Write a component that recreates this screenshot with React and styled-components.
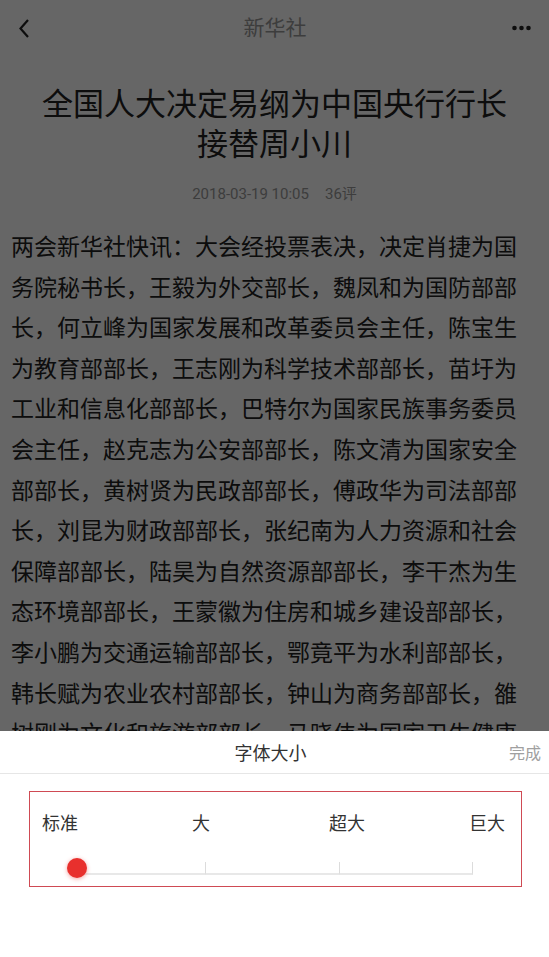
import React, { useState } from 'react';
import styled, { createGlobalStyle } from 'styled-components';

const GlobalStyle = createGlobalStyle`
  html, body {
    margin: 0;
    padding: 0;
    background: #fff;
  }
  body {
    font-family: Roboto, "Noto Sans CJK SC", sans-serif;
    -webkit-font-smoothing: antialiased;
  }
`;

const Screen = styled.div`
  height: 957px;
  display: flex;
  flex-direction: column;
  overflow: hidden;
  background: #fff;
`;

const Article = styled.div`
  flex: 1;
  position: relative;
  overflow: hidden;
`;

const Dim = styled.div`
  position: absolute;
  inset: 0;
  background: rgba(0, 0, 0, 0.6);
`;

const NavBar = styled.header`
  height: 56px;
  display: grid;
  grid-template-columns: 1fr auto 1fr;
  align-items: center;
  padding: 0 17px 0 18px;
`;

const NavTitle = styled.div`
  font-size: 21px;
  color: #999;
  line-height: 28px;
`;

const NavIcon = styled.svg`
  display: block;
  justify-self: ${(p) => (p.$end ? 'end' : 'start')};
  color: #222;
`;

const Headline = styled.h1`
  margin: 29px 0 0;
  padding: 0 28px;
  font-size: 31px;
  font-weight: 400;
  line-height: 40px;
  text-align: center;
  color: #222;
`;

const Meta = styled.div`
  margin-top: 19px;
  font-size: 15px;
  line-height: 20px;
  text-align: center;
  color: #999;

  span + span {
    margin-left: 16px;
  }
`;

const Body = styled.p`
  margin: 24px 0 0;
  padding: 0 11px;
  font-size: 23px;
  line-height: 40.6px;
  color: #222;
`;

const Sheet = styled.section`
  height: 226px;
  flex-shrink: 0;
  background: #fff;
`;

const SheetHeader = styled.div`
  height: 42px;
  display: grid;
  grid-template-columns: 1fr auto 1fr;
  align-items: center;
  border-bottom: 1px solid #e6e6e6;
  padding-right: 8px;
`;

const SheetTitle = styled.div`
  grid-column: 2;
  font-size: 18px;
  color: #333;
`;

const DoneButton = styled.button`
  justify-self: end;
  border: none;
  background: none;
  padding: 0;
  font-family: inherit;
  font-size: 16px;
  color: #a0a0a0;
  cursor: pointer;
`;

const SizeBox = styled.div`
  box-sizing: border-box;
  height: 96px;
  margin: 17px 27px 0 29px;
  border: 1px solid #cf4a53;
  padding: 20px 0 0;
`;

const Labels = styled.div`
  display: grid;
  grid-template-columns: 150px 137px 140px 1fr;
  padding: 0 16px 0 12px;
  font-size: 18px;
  line-height: 24px;
`;

const Label = styled.span`
  color: #333;
  justify-self: ${(p) => (p.$last ? 'end' : 'start')};
  cursor: pointer;
`;

const Slider = styled.div`
  position: relative;
  width: 400px;
  height: 28px;
  margin: 20px 0 0 43px;
  padding-top: 6px;
  box-sizing: border-box;
  display: flex;
`;

const Segment = styled.div`
  flex: 1;
  height: 11px;
  border-bottom: 2px solid #e8e8e8;
  border-right: 1px solid #dcdcdc;
`;

const Knob = styled.div`
  position: absolute;
  top: 2px;
  left: ${(p) => p.$pos * 133.3 - 6}px;
  width: 20px;
  height: 20px;
  border-radius: 50%;
  background: #e8302d;
  box-shadow: 0 1px 4px rgba(232, 48, 45, 0.45);
`;

const sizes = ['标准', '大', '超大', '巨大'];

const text =
  '两会新华社快讯：大会经投票表决，决定肖捷为国务院秘书长，王毅为外交部长，魏凤和为国防部部长，何立峰为国家发展和改革委员会主任，陈宝生为教育部部长，王志刚为科学技术部部长，苗圩为工业和信息化部部长，巴特尔为国家民族事务委员会主任，赵克志为公安部部长，陈文清为国家安全部部长，黄树贤为民政部部长，傅政华为司法部部长，刘昆为财政部部长，张纪南为人力资源和社会保障部部长，陆昊为自然资源部部长，李干杰为生态环境部部长，王蒙徽为住房和城乡建设部部长，李小鹏为交通运输部部长，鄂竟平为水利部部长，韩长赋为农业农村部部长，钟山为商务部部长，雒树刚为文化和旅游部部长，马晓伟为国家卫生健康委员会主任，孙绍骋为退役军人事务部部长，王玉普为应急管理部部长。';

export default function App() {
  const [size, setSize] = useState(0);

  return (
    <Screen>
      <GlobalStyle />
      <Article>
        <NavBar>
          <NavIcon width="12" height="21" viewBox="0 0 12 21">
            <path d="M10 2 L2.5 10.5 L10 19" fill="none" stroke="currentColor" strokeWidth="2.2" />
          </NavIcon>
          <NavTitle>新华社</NavTitle>
          <NavIcon $end width="20" height="6" viewBox="0 0 20 6">
            <circle cx="2.5" cy="3" r="2.3" fill="currentColor" />
            <circle cx="9.5" cy="3" r="2.3" fill="currentColor" />
            <circle cx="16.5" cy="3" r="2.3" fill="currentColor" />
          </NavIcon>
        </NavBar>
        <Headline>全国人大决定易纲为中国央行行长接替周小川</Headline>
        <Meta>
          <span>2018-03-19 10:05</span>
          <span>36评</span>
        </Meta>
        <Body>{text}</Body>
        <Dim />
      </Article>

      <Sheet>
        <SheetHeader>
          <SheetTitle>字体大小</SheetTitle>
          <DoneButton>完成</DoneButton>
        </SheetHeader>
        <SizeBox>
          <Labels>
            {sizes.map((s, i) => (
              <Label key={s} $last={i === sizes.length - 1} onClick={() => setSize(i)}>
                {s}
              </Label>
            ))}
          </Labels>
          <Slider>
            <Segment />
            <Segment />
            <Segment />
            <Knob $pos={size} />
          </Slider>
        </SizeBox>
      </Sheet>
    </Screen>
  );
}
